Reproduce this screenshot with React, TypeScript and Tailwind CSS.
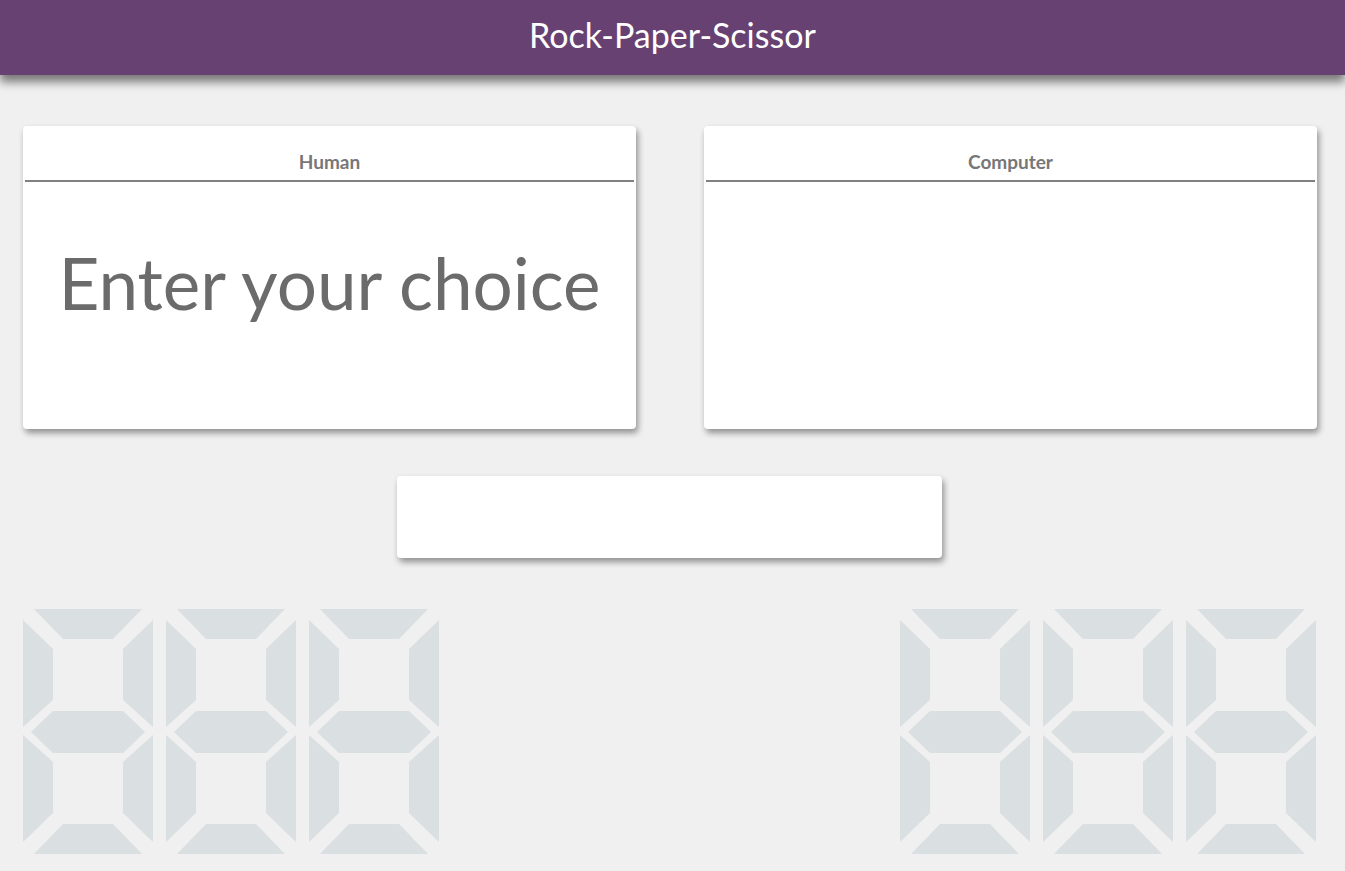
import React from "react";

const SEGMENTS = [
  "11,0 119,0 90,30 40,30",
  "40,215 90,215 119,245 11,245",
  "0,11 30,40 30,91 0,118",
  "0,126 30,153 30,204 0,233",
  "130,11 100,40 100,91 130,118",
  "130,126 100,153 100,204 130,233",
  "8,123 30,102 100,102 122,123 100,144 30,144",
];

function Digit() {
  return (
    <svg width="130" height="245" viewBox="0 0 130 245" className="block">
      {SEGMENTS.map((p, i) => (
        <polygon key={i} points={p} fill="#dadfe1" />
      ))}
    </svg>
  );
}

function Display() {
  return (
    <div className="flex gap-[13px]">
      <Digit />
      <Digit />
      <Digit />
    </div>
  );
}

function Card({ title, children }: { title: string; children?: React.ReactNode }) {
  return (
    <div className="w-[613px] h-[303px] bg-white rounded-[4px] shadow-[2px_4px_6px_rgba(0,0,0,0.4)] flex flex-col">
      <div className="h-[56px] mx-[2px] border-b-2 border-[#808080] flex items-end justify-center pb-[9px]">
        <span className="text-[19px] font-bold text-[#777777] leading-none">{title}</span>
      </div>
      <div className="flex-1 flex items-center justify-center pb-[46px]">{children}</div>
    </div>
  );
}

export default function App() {
  return (
    <div
      className="min-h-[871px] bg-[#f0f0f0] overflow-hidden"
      style={{ fontFamily: "Lato, 'Open Sans', sans-serif" }}
    >
      <header className="h-[75px] bg-[#674172] shadow-[0_7px_9px_rgba(0,0,0,0.5)] flex items-center justify-center relative z-10">
        <h1 className="text-[34px] text-white leading-none pb-[6px]">Rock-Paper-Scissor</h1>
      </header>
      <div className="pt-[51px] pl-[23px] flex gap-[68px]">
        <Card title="Human">
          <span className="text-[71px] text-[#6b6b6b] leading-none">Enter your choice</span>
        </Card>
        <Card title="Computer" />
      </div>
      <div className="mt-[47px] flex justify-center">
        <div className="w-[545px] h-[82px] bg-white rounded-[4px] shadow-[2px_4px_6px_rgba(0,0,0,0.4)] ml-[-6px]" />
      </div>
      <div className="mt-[51px] pl-[23px] pr-[29px] flex justify-between">
        <Display />
        <Display />
      </div>
    </div>
  );
}
